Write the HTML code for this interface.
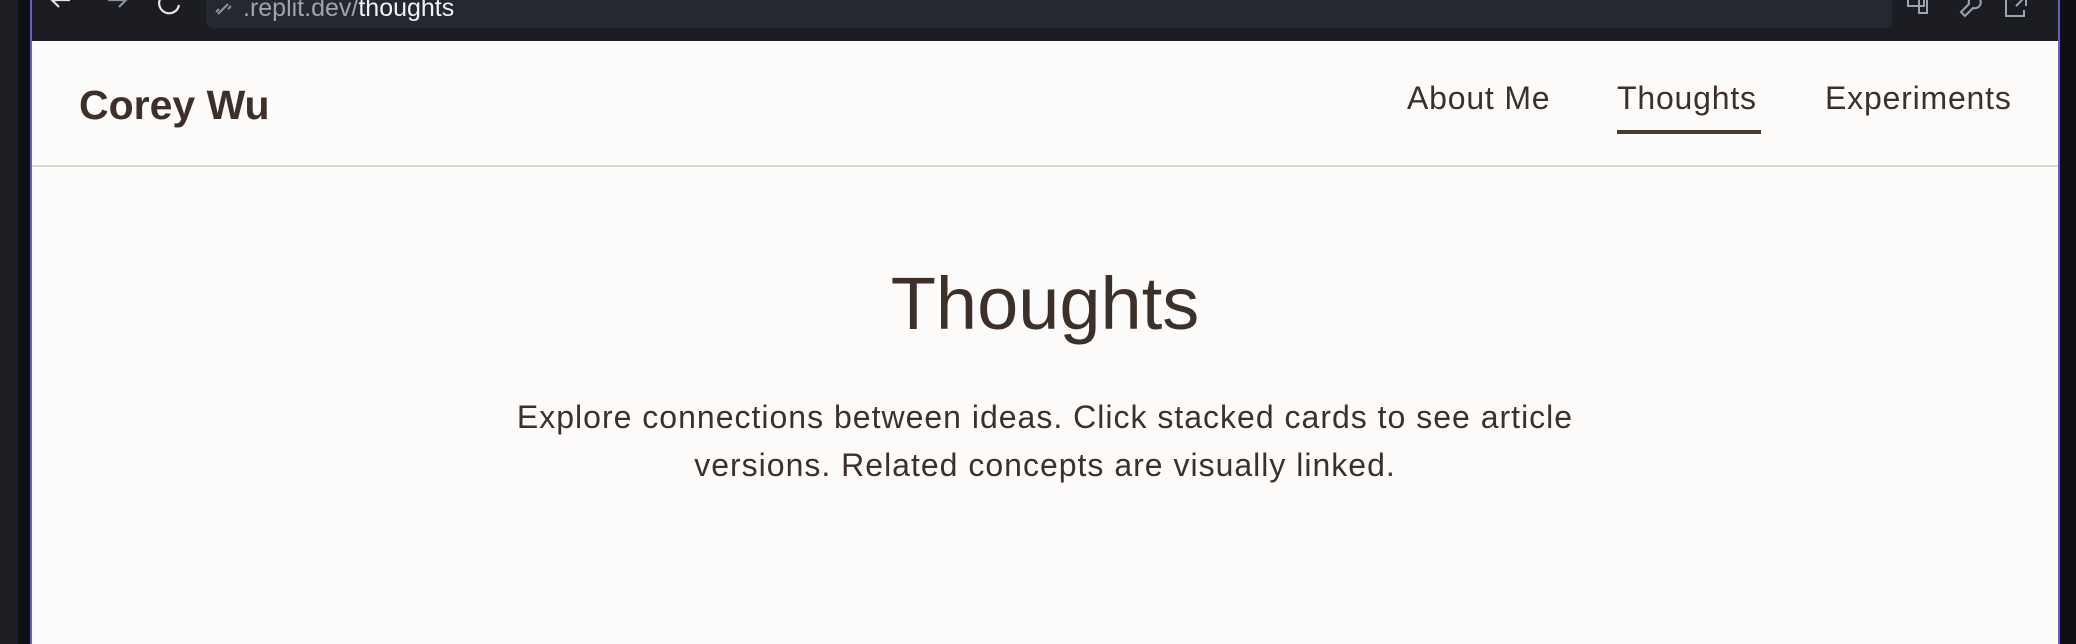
<!DOCTYPE html>
<html><head><meta charset="utf-8"><style>
*{margin:0;padding:0;box-sizing:border-box}
body{width:2076px;height:644px;overflow:hidden;background:#1c1e24;position:relative;font-family:"Liberation Sans",sans-serif}
.lstrip{position:absolute;left:18px;top:0;width:12px;height:644px;background:#0f1014}
.lline{position:absolute;left:30px;top:0;width:2px;height:644px;background:#6b5bd0}
.rline{position:absolute;left:2058px;top:0;width:2px;height:644px;background:#6b5bd0}
.rstrip{position:absolute;left:2060px;top:0;width:16px;height:644px;background:#0f1014}
.bar{position:absolute;left:32px;top:0;width:2026px;height:41px;background:#1b1d23}
.url{position:absolute;left:206px;top:-10px;width:1686px;height:38px;background:#252830;border-radius:8px}
.urltext{position:absolute;left:243px;top:-6px;font-size:25px;color:#9ea3ad;white-space:nowrap}
.urltext b{font-weight:normal;color:#f1f2f4}
.page{position:absolute;left:32px;top:41px;width:2026px;height:603px;background:#fdfcfa}
.hdr{position:absolute;left:0;top:0;width:2026px;height:126px;border-bottom:2px solid #dcdad4}
.logo{position:absolute;left:47px;top:41px;font-size:41px;font-weight:bold;color:#3d3029}
.nav{position:absolute;top:39px;font-size:32px;letter-spacing:0.8px;color:#3d3029;white-space:nowrap}
.ul{position:absolute;left:1585px;top:89px;width:144px;height:4px;background:#4a3b32}
h1{position:absolute;left:0;width:2026px;top:220px;text-align:center;font-size:74px;font-weight:normal;color:#3d3029}
p{position:absolute;left:413px;width:1200px;top:352px;text-align:center;font-size:32px;letter-spacing:1px;line-height:48px;color:#3d3029}
</style></head><body>
<div class="lstrip"></div><div class="lline"></div>
<div class="bar"></div>
<svg style="position:absolute;left:48px;top:-8px" width="150" height="26" fill="none" stroke-width="2.2">
<path d="M22 8H4M11 1L4 8L11 15" stroke="#e6e7ea"/>
<path d="M60 8H78M71 1L78 8L71 15" stroke="#8f939c"/>
<path d="M128 4A10 10 0 1 0 131 13" stroke="#e6e7ea"/>
</svg>
<div class="url"></div>
<svg style="position:absolute;left:214px;top:0px" width="24" height="20" fill="none" stroke="#8f939c" stroke-width="2"><path d="M4 14L14 4M2 12l3-3M17 6l-3 3"/></svg>
<div class="urltext">.replit.dev/<b>thoughts</b></div>
<svg style="position:absolute;left:1906px;top:-6px" width="140" height="26" fill="none" stroke="#9ea3ad" stroke-width="2">
<rect x="2" y="0" width="16" height="12"/><rect x="13" y="5" width="8" height="14"/>
<path d="M55 18l8-8a6 6 0 1 1 4 4l-8 8z"/>
<path d="M106 4h-6v18h18v-6M110 2h10v10M120 2l-10 10"/>
</svg>
<div class="rline"></div><div class="rstrip"></div>
<div class="page">
<div class="hdr">
<div class="logo">Corey Wu</div>
<div class="nav" style="left:1375px">About Me</div>
<div class="nav" style="left:1585px">Thoughts</div>
<div class="nav" style="left:1793px">Experiments</div>
<div class="ul"></div>
</div>
<h1>Thoughts</h1>
<p>Explore connections between ideas. Click stacked cards to see article versions. Related concepts are visually linked.</p>
</div>
</body></html>
